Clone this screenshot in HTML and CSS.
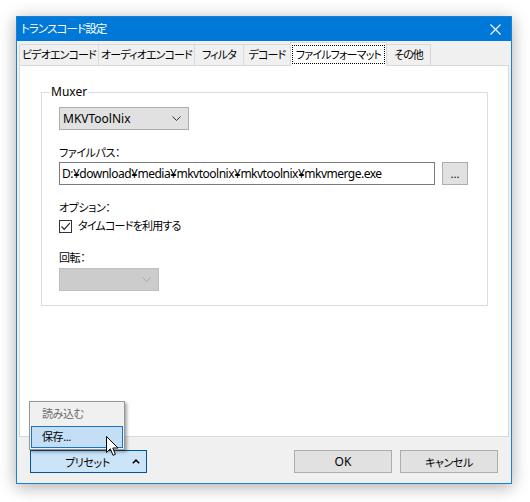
FILE: index.html
```html
<!DOCTYPE html>
<html lang="ja">
<head>
<meta charset="utf-8">
<link rel="stylesheet" href="styles.css">
</head>
<body>
<div class="window">
  <div class="titlebar">
    <span class="title ja">トランスコード設定</span>
    <svg class="close" width="11" height="11" viewBox="0 0 11 11"><path d="M0.5 0.5 L10.5 10.5 M10.5 0.5 L0.5 10.5" stroke="#fff" stroke-width="1.1" fill="none"/></svg>
  </div>
  <div class="tabs">
    <div class="tab w1 ja">ビデオエンコード</div>
    <div class="tab w2 ja">オーディオエンコード</div>
    <div class="tab w3 ja">フィルタ</div>
    <div class="tab w4 ja">デコード</div>
    <div class="tab sel w5 ja"><span class="focus">ファイルフォーマット</span></div>
    <div class="tab w6 ja">その他</div>
  </div>
  <div class="panel">
    <fieldset class="group">
      <legend>Muxer</legend>
      <div class="combo">
        <span>MKVToolNix</span>
        <svg width="9" height="5" viewBox="0 0 9 5"><path d="M0.5 0.5 L4.5 4.5 L8.5 0.5" stroke="#333" fill="none"/></svg>
      </div>
      <div class="label l1 ja">ファイルパス：</div>
      <div class="pathrow">
        <div class="input">D:¥download¥media¥mkvtoolnix¥mkvtoolnix¥mkvmerge.exe</div>
        <div class="btn browse">...</div>
      </div>
      <div class="label l2 ja">オプション：</div>
      <div class="check">
        <span class="box"><svg width="11" height="11" viewBox="0 0 11 11"><path d="M1.5 5.5 L4.2 8.3 L9.8 2.2" stroke="#222" stroke-width="1.2" fill="none"/></svg></span>
        <span class="ja cl">タイムコードを利用する</span>
      </div>
      <div class="label l3 ja">回転：</div>
      <div class="combo disabled">
        <svg width="9" height="5" viewBox="0 0 9 5"><path d="M0.5 0.5 L4.5 4.5 L8.5 0.5" stroke="#a8a8a8" fill="none"/></svg>
      </div>
    </fieldset>
  </div>
  <div class="bottom">
    <div class="btn preset">
      <span class="ptext ja">プリセット</span>
      <svg class="caret" width="8" height="5" viewBox="0 0 8 5"><path d="M0.8 4.3 L4 1.2 L7.2 4.3" stroke="#000" stroke-width="1.6" fill="none"/></svg>
    </div>
    <div class="spacer"></div>
    <div class="btn dlg">OK</div>
    <div class="btn dlg ja">キャンセル</div>
  </div>
  <div class="menu">
    <div class="item disabled ja">読み込む</div>
    <div class="item hot ja">保存...</div>
  </div>
  <svg class="cursor" width="14" height="21" viewBox="0 0 14 21"><path d="M0.5 0.5 L0.5 16.5 L4.3 12.8 L7 19.3 L9.4 18.3 L6.8 12 L12 12 Z" fill="#fff" stroke="#000" stroke-width="1" stroke-linejoin="miter"/></svg>
</div>
</body>
</html>
```
FILE: styles.css
```css
html, body {
  margin: 0;
  padding: 0;
  background: #ffffff;
}
body {
  width: 530px;
  height: 502px;
  overflow: hidden;
  font-family: "Noto Sans", "Noto Sans CJK JP", sans-serif;
  font-size: 12px;
  color: #000;
  font-feature-settings: "palt";
}
.ja {
  font-size: 11px;
  letter-spacing: -0.4px;
  white-space: nowrap;
}
.window {
  position: relative;
  box-sizing: border-box;
  margin: 16px 0 0 16px;
  width: 496px;
  height: 468px;
  border: 1px solid #1c80d4;
  background: #f0f0f0;
  box-shadow: 0 3px 16px rgba(0,0,0,0.33);
  display: flex;
  flex-direction: column;
}
.titlebar {
  height: 24px;
  background: #0078d7;
  color: #fff;
  display: flex;
  align-items: center;
  padding: 0 10px 0 4px;
}
.title { flex: 1; line-height: 24px; font-size: 11.5px; letter-spacing: -0.9px; }
.tabs {
  height: 24px;
  display: flex;
  align-items: flex-end;
  padding-left: 2px;
}
.tab {
  box-sizing: border-box;
  height: 21px;
  border: 1px solid #d9d9d9;
  border-bottom: none;
  border-right: none;
  background: #f0f0f0;
  display: flex;
  align-items: center;
  justify-content: center;
  line-height: 16px;
  letter-spacing: -0.85px;
}
.tab.w6 { border-right: 1px solid #d9d9d9; }
.w1 { width: 79px; }
.w2 { width: 96px; }
.w3 { width: 49px; }
.w4 { width: 47px; }
.w5 { width: 97px; }
.w6 { width: 44px; }
.tab.sel {
  background: #fff;
  border-right: 1px solid #d9d9d9;
  margin-bottom: -1px;
  height: 24px;
  position: relative;
  z-index: 2;
}
.tab.sel + .tab { border-left: none; }
.focus {
  outline: 1px dotted #000;
  padding: 1px 3px;
  line-height: 15px;
}
.panel {
  box-sizing: border-box;
  margin: 0 2px;
  height: 372px;
  background: #fff;
  border: 1px solid #d9d9d9;
  padding: 18px 20px 0 21px;
}
.group {
  margin: 0;
  border: 1px solid #dcdcdc;
  padding: 7px 17px 15px 17px;
  height: 222px;
  box-sizing: border-box;
}
.group legend {
  padding: 0 1px;
  margin-left: -9px;
  line-height: 16px;
}
.combo {
  box-sizing: border-box;
  width: 130px;
  height: 23px;
  background: #e1e1e1;
  border: 1px solid #adadad;
  display: flex;
  align-items: center;
  justify-content: space-between;
  padding: 0 7px 0 3px;
}
.combo.disabled {
  width: 100px;
  background: #cccccc;
  border-color: #bfbfbf;
  justify-content: flex-end;
}
.label { line-height: 16px; }
.l1 { margin-top: 15px; }
.l2 { margin-top: 15px; }
.l3 { margin-top: 16px; }
.pathrow {
  display: flex;
  align-items: center;
  gap: 7px;
  margin-top: 1px;
}
.input {
  box-sizing: border-box;
  width: 376px;
  height: 23px;
  border: 1px solid #7a7a7a;
  background: #fff;
  padding: 0 2px;
  line-height: 21px;
  white-space: nowrap;
  overflow: hidden;
  letter-spacing: -0.5px;
}
.btn {
  box-sizing: border-box;
  height: 23px;
  background: #e1e1e1;
  border: 1px solid #adadad;
  display: flex;
  align-items: center;
  justify-content: center;
}
.browse { width: 26px; margin-top: -1px; font-size: 11px; }
.check {
  display: flex;
  align-items: center;
  gap: 6px;
  margin-top: 2px;
  line-height: 16px;
}
.cl { letter-spacing: -0.8px; }
.box {
  box-sizing: border-box;
  width: 13px;
  height: 13px;
  border: 1px solid #333;
  background: #fff;
  display: flex;
  align-items: center;
  justify-content: center;
}
.label.l3 + .combo { margin-top: 2px; }
.bottom {
  flex: 1;
  display: flex;
  align-items: flex-start;
  padding: 13px 13px 0 13px;
  gap: 8px;
}
.preset {
  width: 117px;
  background: #cce4f7;
  border-color: #005499;
  position: relative;
}
.ptext { margin-left: -2px; }
.caret { position: absolute; right: 6px; top: 8px; }
.spacer { flex: 1; }
.dlg { width: 98px; }
.menu {
  position: absolute;
  left: 12px;
  top: 384px;
  box-sizing: border-box;
  width: 96px;
  height: 49px;
  border: 1px solid #979797;
  background: #f0f0f0;
  box-shadow: 2px 2px 3px rgba(0,0,0,0.35);
  padding: 1px;
  display: flex;
  flex-direction: column;
  gap: 1px;
}
.item {
  box-sizing: border-box;
  height: 22px;
  line-height: 20px;
  padding-left: 10px;
  border: 1px solid transparent;
}
.item.disabled { color: #6d6d6d; }
.item.hot {
  background: #c3def5;
  border-color: #1a74c4;
}
.cursor {
  position: absolute;
  left: 89px;
  top: 419px;
}
```
